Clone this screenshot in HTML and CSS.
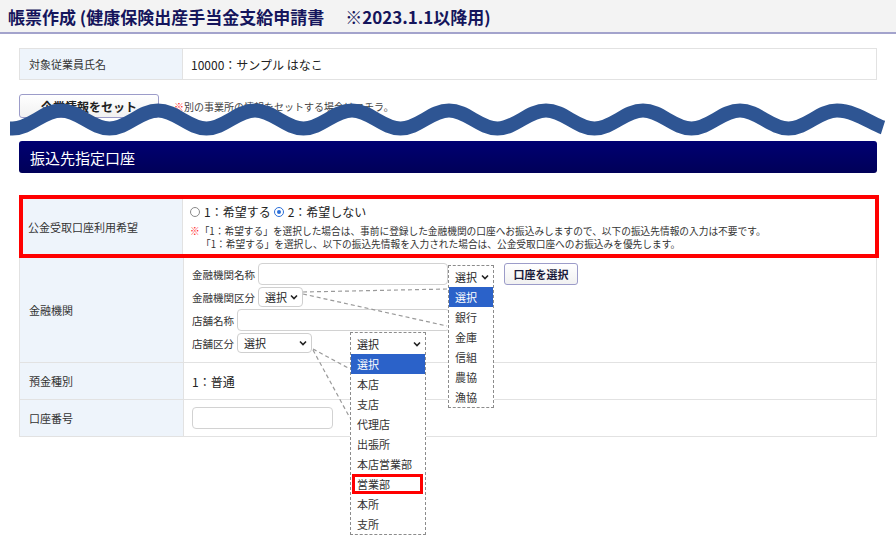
FILE: index.html
```html
<!DOCTYPE html>
<html lang="ja">
<head>
<meta charset="utf-8">
<title>帳票作成</title>
<link rel="stylesheet" href="styles.css">
</head>
<body>
<header class="page-head">
  <h1 class="page-title">帳票作成 (健康保険出産手当金支給申請書　 ※2023.1.1以降用)</h1>
</header>
<main class="content">
  <div class="emp-row">
    <div class="emp-label">対象従業員氏名</div>
    <div class="emp-value">10000：サンプル はなこ</div>
  </div>
  <div class="set-row">
    <button class="btn-set">企業情報をセット</button>
    <span class="set-note"><span class="mark">※</span>別の事業所の情報をセットする場合はコチラ。</span>
  </div>
  <h2 class="section-bar">振込先指定口座</h2>
  <div class="alert-box">
    <div class="form-row row-public">
      <div class="form-label">公金受取口座利用希望</div>
      <div class="form-value">
        <div class="radio-line">
          <span class="radio"></span><span class="radio-text">1：希望する</span>
          <span class="radio checked"></span><span class="radio-text">2：希望しない</span>
        </div>
        <p class="notes"><span class="mark">※</span>「1：希望する」を選択した場合は、事前に登録した金融機関の口座へお振込みしますので、以下の振込先情報の入力は不要です。<br>「1：希望する」を選択し、以下の振込先情報を入力された場合は、公金受取口座へのお振込みを優先します。</p>
      </div>
    </div>
  </div>
  <div class="form-table">
    <div class="form-row row-bank">
      <div class="form-label">金融機関</div>
      <div class="form-value bank-fields">
        <div class="sub-row">
          <span class="sub-label">金融機関名称</span>
          <span class="text-input w-bank"></span>
          <span class="dd-slot">
            <span class="dropdown dd-bank">
              <span class="dd-select">選択<svg class="chev" viewBox="0 0 8 6"><polyline points="1,1.5 4,4.5 7,1.5"/></svg></span>
              <span class="dd-list">
                <span class="dd-item active">選択</span>
                <span class="dd-item">銀行</span>
                <span class="dd-item">金庫</span>
                <span class="dd-item">信組</span>
                <span class="dd-item">農協</span>
                <span class="dd-item">漁協</span>
              </span>
            </span>
          </span>
          <button class="btn-account">口座を選択</button>
        </div>
        <div class="sub-row">
          <span class="sub-label">金融機関区分</span>
          <span class="select-box w-sel-short">選択<svg class="chev" viewBox="0 0 8 6"><polyline points="1,1.5 4,4.5 7,1.5"/></svg></span>
        </div>
        <div class="sub-row">
          <span class="sub-label">店舗名称</span>
          <span class="text-input w-branch"></span>
        </div>
        <div class="sub-row sub-branch-type">
          <span class="sub-label">店舗区分</span>
          <span class="select-box w-sel-long">選択<svg class="chev" viewBox="0 0 8 6"><polyline points="1,1.5 4,4.5 7,1.5"/></svg></span>
          <span class="dropdown dd-branch">
            <span class="dd-select">選択<svg class="chev" viewBox="0 0 8 6"><polyline points="1,1.5 4,4.5 7,1.5"/></svg></span>
            <span class="dd-list">
              <span class="dd-item active">選択</span>
              <span class="dd-item">本店</span>
              <span class="dd-item">支店</span>
              <span class="dd-item">代理店</span>
              <span class="dd-item">出張所</span>
              <span class="dd-item">本店営業部</span>
              <span class="dd-item marked">営業部</span>
              <span class="dd-item">本所</span>
              <span class="dd-item">支所</span>
            </span>
          </span>
        </div>
      </div>
    </div>
    <div class="form-row row-type">
      <div class="form-label">預金種別</div>
      <div class="form-value plain-value">1：普通</div>
    </div>
    <div class="form-row row-number">
      <div class="form-label">口座番号</div>
      <div class="form-value">
        <span class="text-input w-number"></span>
      </div>
    </div>
  </div>
</main>

<svg class="wave" width="896" height="160" viewBox="0 0 896 160">
  <path d="M10 128.5 L12.5 128.5 C30.2 128.5 43.3 110.5 61 110.5 S91.8 128.5 109.5 128.5 S140.3 110.5 158 110.5 S188.8 128.5 206.5 128.5 S237.3 110.5 255 110.5 S285.8 128.5 303.5 128.5 S334.3 110.5 352 110.5 S382.8 128.5 400.5 128.5 S431.3 110.5 449 110.5 S479.8 128.5 497.5 128.5 S528.3 110.5 546 110.5 S576.8 128.5 594.5 128.5 S625.3 110.5 643 110.5 S673.8 128.5 691.5 128.5 S722.3 110.5 740 110.5 S770.8 128.5 788.5 128.5 S819.3 110.5 837 110.5 C854.7 110.5 872 124 883 127.5"/>
</svg>

<svg class="connectors" width="896" height="537" viewBox="0 0 896 537">
  <line x1="303" y1="292" x2="447" y2="289"/>
  <line x1="303" y1="294" x2="447" y2="326"/>
  <line x1="313" y1="349" x2="350" y2="369"/>
  <line x1="313" y1="350" x2="350" y2="418"/>
</svg>
</body>
</html>
```

FILE: styles.css
```css
* { box-sizing: border-box; }

body {
  margin: 0;
  position: relative;
  width: 896px;
  height: 537px;
  overflow: hidden;
  background: #ffffff;
  font-family: "Noto Sans CJK JP", "Noto Sans", sans-serif;
  color: #333333;
}

.page-head {
  height: 34px;
  background: #f3f3f3;
  border-bottom: 2px solid #a3a3cc;
  display: flex;
  align-items: center;
  padding-left: 8px;
}

.page-title {
  margin: 0;
  font-size: 17px;
  font-weight: 700;
  color: #15155c;
  white-space: pre;
}

.content {
  padding: 14px 19px 0 19px;
}

/* employee row */
.emp-row {
  display: flex;
  height: 32px;
  border: 1px solid #e2e2e2;
}
.emp-label {
  width: 163px;
  background: #eef4fb;
  border-right: 1px solid #e2e2e2;
  display: flex;
  align-items: center;
  padding-left: 9px;
  font-size: 11px;
}
.emp-value {
  display: flex;
  align-items: center;
  padding-left: 8px;
  font-size: 12px;
  color: #222;
}

/* set row */
.set-row {
  margin-top: 14px;
  display: flex;
  align-items: center;
  gap: 15px;
}
.btn-set {
  width: 140px;
  height: 24px;
  border: 1px solid #9c9cc9;
  border-radius: 3px;
  background: linear-gradient(#ffffff, #f1f1f1);
  font-family: inherit;
  font-size: 12px;
  font-weight: 700;
  color: #222;
  padding: 0;
}
.set-note {
  font-size: 10px;
  color: #444;
}
.mark { color: #ff1a1a; }

/* section bar */
.section-bar {
  margin: 23px 0 0 0;
  height: 32px;
  background: linear-gradient(#000072, #000058);
  border-radius: 3px;
  color: #ffffff;
  font-size: 15px;
  font-weight: 400;
  display: flex;
  align-items: center;
  padding-left: 11px;
}

/* alert box */
.alert-box {
  margin-top: 22px;
  margin-right: -2px;
  border: 4px solid #ff0000;
}

.form-row {
  display: flex;
}
.form-label {
  width: 164px;
  flex: none;
  background: #eef4fb;
  border-right: 1px solid #e2e2e2;
  display: flex;
  align-items: center;
  padding-left: 9px;
  font-size: 11px;
  color: #333;
}
.alert-box .form-label {
  width: 160px;
  padding-left: 5px;
}
.form-value {
  flex: 1;
  padding-left: 7px;
}

.row-public { height: 55px; }
.row-public .form-value { padding-top: 4px; }
.radio-line {
  display: flex;
  align-items: center;
  height: 17px;
  font-size: 12px;
  color: #222;
}
.radio {
  width: 10px;
  height: 10px;
  border: 1px solid #8a8a8a;
  border-radius: 50%;
  margin-right: 4px;
  background: #fff;
  position: relative;
}
.radio.checked {
  border-color: #2c6fd8;
  margin-left: 3px;
}
.radio.checked::after {
  content: "";
  position: absolute;
  left: 2px;
  top: 2px;
  width: 4px;
  height: 4px;
  border-radius: 50%;
  background: #2c6fd8;
}
.notes {
  margin: 5px 0 0 0;
  font-size: 9.7px;
  line-height: 13px;
  color: #333;
  padding-left: 11px;
  text-indent: -11px;
  white-space: nowrap;
}

/* lower table */
.form-table {
  border: 1px solid #e2e2e2;
  border-top: none;
}
.form-table .form-row + .form-row {
  border-top: 1px solid #e2e2e2;
}
.row-bank { height: 104px; }
.row-type { height: 37px; }
.row-number { height: 37px; }

.bank-fields {
  padding-top: 5px;
  display: flex;
  flex-direction: column;
  gap: 1px;
}
.sub-row {
  height: 22px;
  display: flex;
  align-items: center;
}
.sub-label {
  font-size: 10.5px;
  color: #333;
  margin-right: 3px;
  padding-left: 1px;
}
.text-input {
  display: block;
  height: 22px;
  border: 1px solid #d2d2d2;
  border-radius: 4px;
  background: #fff;
}
.w-bank { width: 190px; }
.w-branch { width: 213px; }
.w-number { width: 141px; }

.select-box {
  height: 20px;
  border: 1px solid #cfcfcf;
  border-radius: 4px;
  background: #fff;
  display: flex;
  align-items: center;
  justify-content: space-between;
  padding: 0 4px 0 6px;
  font-size: 11px;
  color: #222;
}
.w-sel-short { width: 45px; }
.w-sel-long { width: 75px; }
.chev {
  width: 8px;
  height: 6px;
  fill: none;
  stroke: #222;
  stroke-width: 1.6;
}

.dd-slot {
  width: 46px;
  height: 22px;
  position: relative;
}
.dropdown {
  position: absolute;
  display: flex;
  flex-direction: column;
  border: 1px dashed #8c8c8c;
  background: #fff;
  z-index: 3;
}
.dd-bank {
  left: 0;
  top: 2px;
  width: 46px;
}
.sub-branch-type { position: relative; }
.dd-branch {
  left: 159px;
  top: 0;
  width: 76px;
}
.dd-select {
  height: 21px;
  display: flex;
  align-items: center;
  justify-content: space-between;
  padding: 0 4px 0 6px;
  font-size: 11px;
  color: #222;
}
.dd-list {
  display: flex;
  flex-direction: column;
}
.dd-item {
  height: 20px;
  display: flex;
  align-items: center;
  padding-left: 6px;
  font-size: 11px;
  color: #333;
}
.dd-item.active {
  background: #2b62c9;
  color: #fff;
}
.dd-item.marked {
  width: 71px;
  margin-left: 1px;
  padding-left: 5px;
  outline: 3px solid #ff0000;
  outline-offset: -3px;
}

.btn-account {
  margin-left: 10px;
  width: 74px;
  height: 22px;
  border: 1px solid #9c9cc9;
  border-radius: 3px;
  background: linear-gradient(#ffffff, #f1f1f1);
  font-family: inherit;
  font-size: 11px;
  font-weight: 700;
  color: #1a1a3a;
  padding: 0;
}

.plain-value {
  display: flex;
  align-items: center;
  padding-left: 8px;
  font-size: 12px;
  color: #222;
}
.row-number .form-value {
  display: flex;
  align-items: center;
  padding-left: 8px;
}

/* overlays */
.wave {
  position: absolute;
  left: 0;
  top: 0;
  z-index: 5;
  fill: none;
  stroke: #2e5593;
  stroke-width: 14;
}
.connectors {
  position: absolute;
  left: 0;
  top: 0;
  z-index: 2;
  stroke: #9a9a9a;
  stroke-width: 1.2;
  stroke-dasharray: 4 3;
  pointer-events: none;
}
```
